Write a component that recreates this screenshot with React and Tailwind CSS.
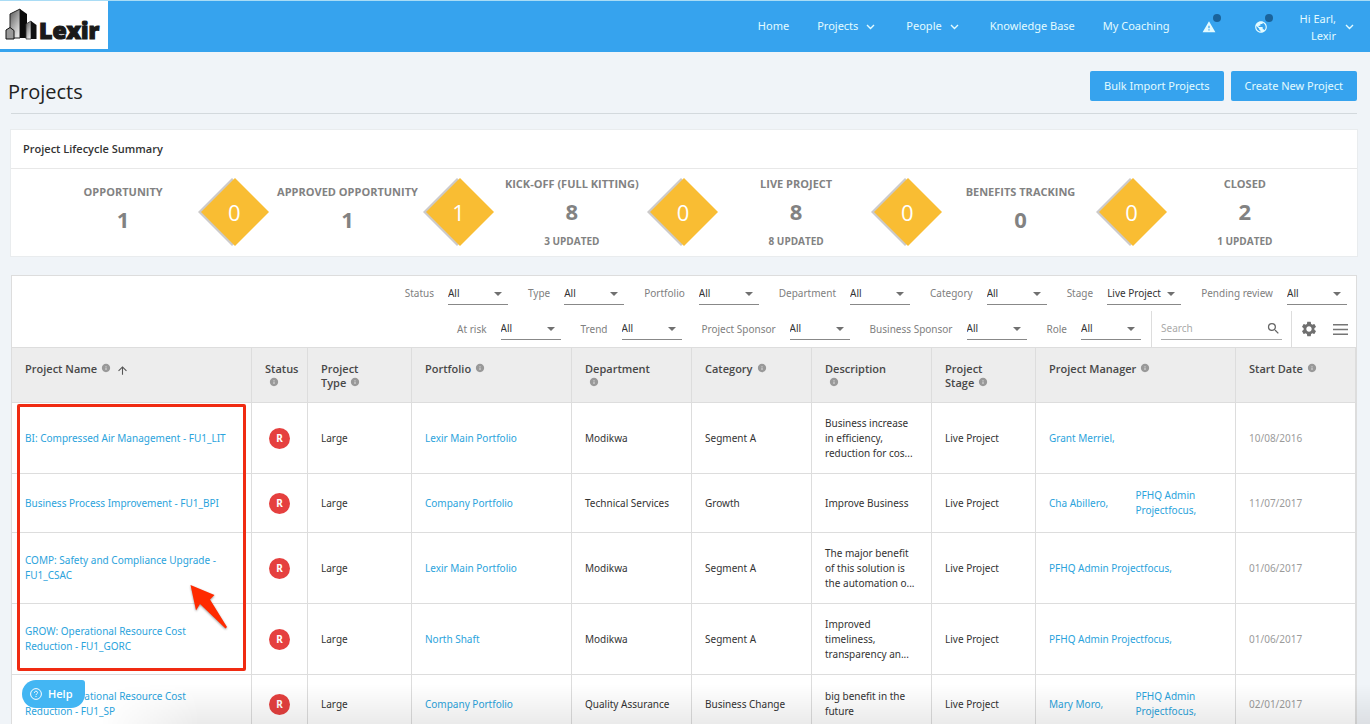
import { MdArrowUpward, MdInfo, MdPublic, MdSearch, MdSettings, MdWarning } from "react-icons/md";

const stages = [
    { name: "Opportunity", count: 1, pending: 0 },
    { name: "Approved Opportunity", count: 1, pending: 1 },
    { name: "Kick-off (Full Kitting)", count: 8, updated: 3, pending: 0 },
    { name: "Live Project", count: 8, updated: 8, pending: 0 },
    { name: "Benefits Tracking", count: 0, pending: 0 },
    { name: "Closed", count: 2, updated: 1 },
];

const columns = [
    { title: "Project Name", width: "w-[240px]", sorted: true },
    { title: "Status", width: "w-[56px]", wrapIcon: true },
    { title: "Project Type", width: "w-[104px]", twoLine: true },
    { title: "Portfolio", width: "w-[160px]" },
    { title: "Department", width: "w-[120px]", wrapIcon: true },
    { title: "Category", width: "w-[120px]" },
    { title: "Description", width: "w-[120px]", wrapIcon: true },
    { title: "Project Stage", width: "w-[104px]", twoLine: true },
    { title: "Project Manager", width: "w-[200px]" },
    { title: "Start Date", width: "w-auto" },
];

const projects = [
    {
        name: "BI: Compressed Air Management - FU1_LIT",
        portfolio: "Lexir Main Portfolio",
        department: "Modikwa",
        category: "Segment A",
        description: ["Business increase", "in efficiency,", "reduction for cos..."],
        managers: ["Grant Merriel,"],
        start: "10/08/2016",
    },
    {
        name: "Business Process Improvement - FU1_BPI",
        portfolio: "Company Portfolio",
        department: "Technical Services",
        category: "Growth",
        description: ["Improve Business"],
        managers: ["Cha Abillero,", "PFHQ Admin Projectfocus,"],
        start: "11/07/2017",
    },
    {
        name: "COMP: Safety and Compliance Upgrade - FU1_CSAC",
        portfolio: "Lexir Main Portfolio",
        department: "Modikwa",
        category: "Segment A",
        description: ["The major benefit", "of this solution is", "the automation o..."],
        managers: ["PFHQ Admin Projectfocus,"],
        start: "01/06/2017",
    },
    {
        name: "GROW: Operational Resource Cost Reduction - FU1_GORC",
        portfolio: "North Shaft",
        department: "Modikwa",
        category: "Segment A",
        description: ["Improved", "timeliness,", "transparency an..."],
        managers: ["PFHQ Admin Projectfocus,"],
        start: "01/06/2017",
    },
    {
        name: "GROW: Operational Resource Cost Reduction - FU1_SP",
        portfolio: "Company Portfolio",
        department: "Quality Assurance",
        category: "Business Change",
        description: ["big benefit in the", "future"],
        managers: ["Mary Moro,", "PFHQ Admin Projectfocus,"],
        start: "02/01/2017",
    },
];

function Chevron() {
    return (
        <svg className="w-[9px] h-[6px]" viewBox="0 0 9 6" fill="none" stroke="currentColor" strokeWidth="1.4">
            <path d="M1 1l3.5 3.5L8 1" />
        </svg>
    );
}

function Logo() {
    return (
        <a href="#" aria-label="Lexir" className="block w-[108px] h-[48px] bg-white">
            <svg className="w-[108px] h-[48px]" viewBox="0 0 108 48">
                <defs>
                    <linearGradient id="tower" x1="0" x2="0.6" y1="0" y2="1">
                        <stop offset="0" stopColor="#555" />
                        <stop offset="1" stopColor="#e4e4e4" />
                    </linearGradient>
                </defs>
                <path d="M10 37V13l10-5v29z" fill="url(#tower)" stroke="#222" strokeWidth="1" />
                <path d="M20 8l7 5v24h-7z" fill="#0c0c0c" />
                <path d="M6 38V29l4-2.500 4 3V38z" fill="#999" stroke="#111" strokeWidth="1" />
                <path d="M26 38V23l5-3v18z" fill="url(#tower)" stroke="#333" strokeWidth="0.8" />
                <path d="M31 20l5.500 4v14H31z" fill="#111" />
                <text x="39" y="38" fill="#1a1a1a" stroke="#1a1a1a" strokeWidth="1.2" fontFamily="Open Sans, sans-serif" fontWeight="800" fontSize="23">Lexir</text>
            </svg>
        </a>
    );
}

function Alert({ icon: Icon, label }) {
    return (
        <button aria-label={label} className="relative">
            <Icon size={14} />
            <span className="absolute -top-[6px] -right-[5px] w-[8px] h-[8px] rounded-full bg-[#1a639b]" />
        </button>
    );
}

function NavBar() {
    return (
        <header className="flex justify-between bg-[#36a3ee] border-t border-[#a9dcf5] h-[52px] font-['Noto_Sans',sans-serif] text-[11px] text-[#e3fbff]">
            <Logo />
            <nav className="flex items-center pr-4">
                <a href="#" className="mr-7">Home</a>
                <button className="flex items-center gap-2 mr-[31px]">Projects <Chevron /></button>
                <button className="flex items-center gap-2 mr-[31px]">People <Chevron /></button>
                <a href="#" className="mr-7">Knowledge Base</a>
                <a href="#" className="mr-8">My Coaching</a>
                <span className="flex gap-[38px] mr-8">
                    <Alert icon={MdWarning} label="Warnings" />
                    <Alert icon={MdPublic} label="Notifications" />
                </span>
                <button className="flex items-center gap-[9px] text-right leading-[17px]">
                    <span>Hi Earl,<br />Lexir</span>
                    <Chevron />
                </button>
            </nav>
        </header>
    );
}

function Stage({ stage }) {
    return (
        <div className="flex flex-col items-center justify-center font-bold text-[#828282] whitespace-nowrap">
            <span className="text-[11px] leading-4 uppercase">{stage.name}</span>
            <span className="text-[22px] leading-7 mt-[5px] mb-2">{stage.count}</span>
            {stage.updated && <span className="text-[10px] leading-4 uppercase">{stage.updated} updated</span>}
        </div>
    );
}

function Diamond({ value }) {
    return (
        <div className="grid place-items-center w-[72px] h-[70px]">
            <svg className="col-start-1 row-start-1 w-[72px] h-[70px]" viewBox="0 0 72 70">
                <path d="M34 1L0 35l34 34 34-34z" fill="#cccaca" />
                <path d="M37 1L3 35l34 34 34-34z" fill="#f9bd33" />
            </svg>
            <span className="col-start-1 row-start-1 text-[22px] text-white">{value}</span>
        </div>
    );
}

function Summary() {
    return (
        <section className="bg-white border border-[#e9ecee] ml-[10px] mr-3 mt-[15px]">
            <h2 className="text-[11px] font-semibold text-[#333] leading-[38px] px-3 border-b border-[#e8e8e8]">Project Lifecycle Summary</h2>
            <div className="grid grid-cols-6 h-[87px]">
                {stages.map((s) => (
                    <div key={s.name} className="relative flex items-center justify-center">
                        <Stage stage={s} />
                        {s.pending !== undefined && (
                            <div className="absolute top-2 -right-[35px]">
                                <Diamond value={s.pending} />
                            </div>
                        )}
                    </div>
                ))}
            </div>
        </section>
    );
}

function Filter({ label, value = "All", wide }) {
    return (
        <label className="flex items-center gap-[14px] text-[#808080]">
            {label}
            <span className={wide ? "relative flex items-center w-[74px]" : "relative flex items-center w-[60px]"}>
                <select className="appearance-none w-full h-[22px] bg-transparent text-[#333] border-b border-[#888]">
                    <option>{value}</option>
                </select>
                <svg className="absolute right-[6px] w-[8px] h-[4px] pointer-events-none" viewBox="0 0 8 4">
                    <path d="M0 0h8L4 4z" fill="#707070" />
                </svg>
            </span>
        </label>
    );
}

function Filters() {
    return (
        <div className="font-['Noto_Sans',sans-serif] text-[10px]">
            <div className="flex justify-end items-center gap-5 h-[35px] pr-[9px]">
                <Filter label="Status" />
                <Filter label="Type" />
                <Filter label="Portfolio" />
                <Filter label="Department" />
                <Filter label="Category" />
                <Filter label="Stage" value="Live Project" wide />
                <Filter label="Pending review" />
            </div>
            <div className="flex justify-end items-center h-[36px]">
                <div className="flex items-center gap-5 pr-[10px]">
                    <Filter label="At risk" />
                    <Filter label="Trend" />
                    <Filter label="Project Sponsor" />
                    <Filter label="Business Sponsor" />
                    <Filter label="Role" />
                </div>
                <div className="flex items-center h-full border-x border-[#ddd] px-[9px]">
                    <label className="flex items-center w-[121px] h-[22px] border-b border-[#aaa]">
                        <input aria-label="Search" placeholder="Search" className="w-[105px] outline-none placeholder:text-[#aaa]" />
                        <MdSearch size={15} className="text-[#666]" />
                    </label>
                </div>
                <button aria-label="Settings" className="ml-2 text-[#6f6f6f]"><MdSettings size={18} /></button>
                <button aria-label="Menu" className="ml-[15px] mr-2">
                    <svg className="w-[15px] h-[11px]" viewBox="0 0 15 11" fill="#757575">
                        <path d="M0 0h15v1.500H0zM0 4.700h15v1.500H0zM0 9.400h15v1.500H0z" />
                    </svg>
                </button>
            </div>
        </div>
    );
}

const cell = "border-r border-b border-[#ddd] px-[13px]";

function HeadCell({ column }) {
    const [first, second] = column.title.split(" ");
    return (
        <th className="border-r border-b border-[#ddd] pl-[13px] pr-1 pt-[14px] text-left align-top font-['Open_Sans',sans-serif] font-semibold text-[11px] leading-[14px] text-[#484848]">
            {column.twoLine ? <>{first}<br />{second}</> : column.title}
            {column.wrapIcon && <br />}
            <MdInfo size={10} className="inline align-baseline ml-1 text-[#999]" />
            {column.sorted && <MdArrowUpward size={13} className="inline ml-[5px] text-[#555]" />}
        </th>
    );
}

function Row({ project }) {
    const tall = project.description.length > 2;
    return (
        <tr className={tall ? "h-[71px]" : "h-[59px]"}>
            <td className="border-r border-b border-[#ddd] pl-[13px] pr-5"><a href="#" className="text-[#2ba3dc]">{project.name}</a></td>
            <td className={cell}>
                <span className="flex items-center justify-center w-[21px] h-[21px] ml-1 rounded-full bg-[#e5403f] text-white font-bold">R</span>
            </td>
            <td className={cell}>Large</td>
            <td className={cell}><a href="#" className="text-[#2ba3dc]">{project.portfolio}</a></td>
            <td className={cell}>{project.department}</td>
            <td className={cell}>{project.category}</td>
            <td className={cell}>
                {project.description.map((line) => <div key={line} className="whitespace-nowrap">{line}</div>)}
            </td>
            <td className={cell}>Live Project</td>
            <td className={cell}>
                <div className="flex items-center">
                    {project.managers.map((m) => (
                        <a key={m} href="#" className={project.managers.length > 1 ? "text-[#2ba3dc] w-1/2 shrink-0" : "text-[#2ba3dc]"}>{m}</a>
                    ))}
                </div>
            </td>
            <td className={cell}><span className="text-[#9b9b9b]">{project.start}</span></td>
        </tr>
    );
}

function ProjectTable() {
    return (
        <div className="relative">
            <table className="w-full table-fixed border-separate border-spacing-0 border-t border-[#ddd] font-['Noto_Sans',sans-serif] text-[10px] leading-[15px] text-[#333]">
                <colgroup>
                    {columns.map((c) => <col key={c.title} className={c.width} />)}
                </colgroup>
                <thead className="bg-[#ededed]">
                    <tr className="h-[55px]">
                        {columns.map((c) => <HeadCell key={c.title} column={c} />)}
                    </tr>
                </thead>
                <tbody>
                    {projects.map((p) => <Row key={p.name} project={p} />)}
                </tbody>
            </table>
            {/* highlight over the project names */}
            <div className="absolute left-[5px] top-[57px] w-[229px] h-[267px] border-[3px] border-[#f02b12] rounded-[2px] pointer-events-none" />
            <svg className="absolute left-[176px] top-[236px] w-[44px] h-[50px] pointer-events-none drop-shadow-[0_1px_1px_rgba(0,0,0,0.4)]" viewBox="0 0 44 50">
                <path d="M2.500 2L26.500 12l-4.500 4.500L39 44l-1.500 1.500L12 21l-4 6.500z" fill="#ff2a00" />
            </svg>
        </div>
    );
}

export default function App() {
    return (
        <div className="relative h-screen overflow-hidden bg-[#f0f4f8] font-['Open_Sans',sans-serif]">
            <NavBar />
            <div className="flex items-center justify-between ml-2 mr-[13px] h-[61px] pt-[7px]">
                <h1 className="text-[20px] text-[#222] pt-3">Projects</h1>
                <div className="flex gap-[7px] font-['Noto_Sans',sans-serif] text-[11px] text-[#e3fbff]">
                    <button className="h-[30px] px-[14px] rounded-[2px] bg-[#36a3ee]">Bulk Import Projects</button>
                    <button className="h-[30px] px-[14px] rounded-[2px] bg-[#36a3ee]">Create New Project</button>
                </div>
            </div>
            <hr className="border-[#d3d9dd] ml-[11px] mr-[13px]" />
            <Summary />
            <section className="bg-white border border-[#ddd] ml-[11px] mr-[13px] mt-[18px]">
                <Filters />
                <ProjectTable />
            </section>
            <div className="absolute inset-x-0 bottom-0 h-10 bg-linear-to-b from-transparent to-black/8 mask-[linear-gradient(to_right,transparent_100px,black_200px)] pointer-events-none" />
            <button className="absolute left-[22px] bottom-[16px] flex items-center gap-[6px] h-7 w-[63px] pl-2 rounded-[14px] rounded-tr-[3px] bg-[#43b6f3] text-white text-[11px] font-semibold">
                <svg className="w-3 h-3" viewBox="0 0 12 12" fill="none" stroke="currentColor">
                    <circle cx="6" cy="6" r="5.400" />
                    <path d="M4.400 4.800C4.400 2.600 7.600 2.700 7.600 4.700 7.600 5.800 6 5.800 6 7.100M6 8v1" />
                </svg>
                Help
            </button>
        </div>
    );
}
